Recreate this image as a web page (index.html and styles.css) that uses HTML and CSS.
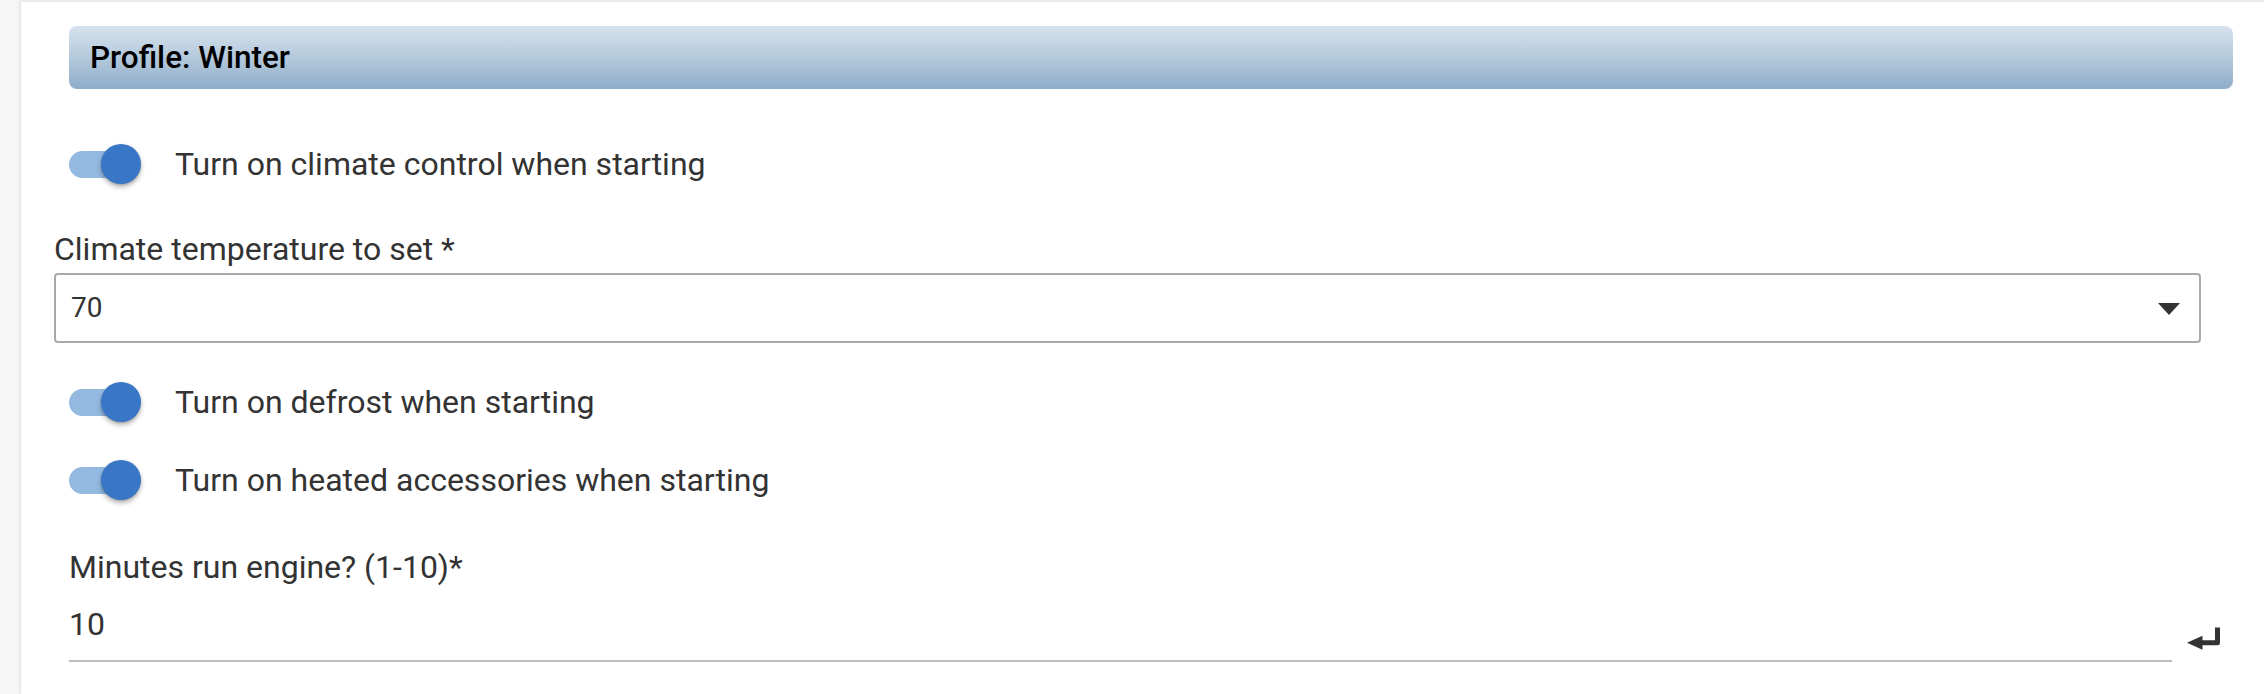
FILE: index.html
```html
<!DOCTYPE html>
<html lang="en">
<head>
<meta charset="utf-8">
<title>Profile: Winter</title>
<link rel="stylesheet" href="styles.css">
</head>
<body>
<div class="page">
  <aside class="sidebar"></aside>
  <main class="main">
    <div class="section-header">Profile: Winter</div>

    <label class="toggle-row toggle-row-first">
      <span class="switch"><span class="track"></span><span class="thumb"></span></span>
      <span class="toggle-label">Turn on climate control when starting</span>
    </label>

    <div class="select-field">
      <div class="field-label">Climate temperature to set *</div>
      <div class="select-box">
        <span class="select-value">70</span>
        <span class="select-arrow"></span>
      </div>
    </div>

    <label class="toggle-row toggle-row-second">
      <span class="switch"><span class="track"></span><span class="thumb"></span></span>
      <span class="toggle-label">Turn on defrost when starting</span>
    </label>

    <label class="toggle-row toggle-row-third">
      <span class="switch"><span class="track"></span><span class="thumb"></span></span>
      <span class="toggle-label">Turn on heated accessories when starting</span>
    </label>

    <div class="text-field">
      <div class="text-field-main">
        <div class="field-label">Minutes run engine? (1-10)*</div>
        <div class="text-value">10</div>
      </div>
      <svg class="enter-icon" width="34" height="24" viewBox="0 0 34 24" aria-hidden="true">
        <polygon points="0,15.8 15.5,8.8 15.5,22.8" fill="#333"/>
        <path d="M14 15.8 H30.5 V0.5" fill="none" stroke="#333" stroke-width="5" stroke-linejoin="round"/>
      </svg>
    </div>
  </main>
</div>
</body>
</html>
```

FILE: styles.css
```css
html, body {
  margin: 0;
  padding: 0;
  background: #ffffff;
}

body {
  font-family: Roboto, "Noto Sans", "Liberation Sans", sans-serif;
  color: #333333;
}

.page {
  display: flex;
  width: 2264px;
  height: 694px;
  overflow: hidden;
}

.sidebar {
  width: 21px;
  flex: 0 0 21px;
  background: #f6f6f7;
}

.main {
  flex: 1;
  border-top: 2px solid #ebebef;
  background: #ffffff;
  box-shadow: -1px 0 3px rgba(0, 0, 0, 0.10);
  display: flex;
  flex-direction: column;
}

.section-header {
  margin: 24px 31px 0 48px;
  height: 63px;
  box-sizing: border-box;
  border-radius: 8px;
  background: linear-gradient(to bottom, #d7e3ee 0%, #b4c9dc 50%, #8eadca 100%);
  display: flex;
  align-items: center;
  padding-left: 21px;
  font-size: 31.5px;
  font-weight: 500;
  color: #000000;
}

.toggle-row {
  display: flex;
  align-items: center;
  height: 56px;
  margin-left: 48px;
}

.toggle-row-first { margin-top: 47px; }
.toggle-row-second { margin-top: 31px; }
.toggle-row-third { margin-top: 22px; }

.switch {
  position: relative;
  width: 72px;
  height: 40px;
  flex: 0 0 72px;
}

.track {
  position: absolute;
  left: 0;
  top: 7px;
  width: 70px;
  height: 27px;
  border-radius: 14px;
  background: #93b9e1;
}

.thumb {
  position: absolute;
  left: 32px;
  top: 0;
  width: 40px;
  height: 40px;
  border-radius: 50%;
  background: #3a76c6;
  box-shadow: 0 3px 5px rgba(0, 0, 0, 0.28), 0 1px 2px rgba(0, 0, 0, 0.15);
}

.toggle-label {
  margin-left: 34px;
  font-size: 32px;
  line-height: 40px;
  color: #333333;
}

.select-field {
  margin: 37px 63px 0 33px;
}

.field-label {
  font-size: 32px;
  line-height: 40px;
  color: #333333;
}

.select-box {
  margin-top: 4px;
  height: 70px;
  box-sizing: border-box;
  border: 2px solid #a9a9a9;
  border-radius: 4px;
  display: flex;
  align-items: center;
  justify-content: space-between;
  padding: 0 19px 0 15px;
}

.select-value {
  font-size: 28px;
  line-height: 32px;
  color: #333333;
}

.select-arrow {
  width: 0;
  height: 0;
  border-left: 11px solid transparent;
  border-right: 11px solid transparent;
  border-top: 12px solid #333333;
  margin-top: 2px;
}

.text-field {
  display: flex;
  align-items: flex-end;
  margin: 39px 0 0 48px;
}

.text-field-main {
  width: 2103px;
  border-bottom: 2px solid #bdbdbd;
  padding-bottom: 16px;
}

.text-value {
  margin-top: 17px;
  font-size: 32px;
  line-height: 40px;
  color: #333333;
}

.enter-icon {
  margin-left: 15px;
  margin-bottom: 11px;
}
```
